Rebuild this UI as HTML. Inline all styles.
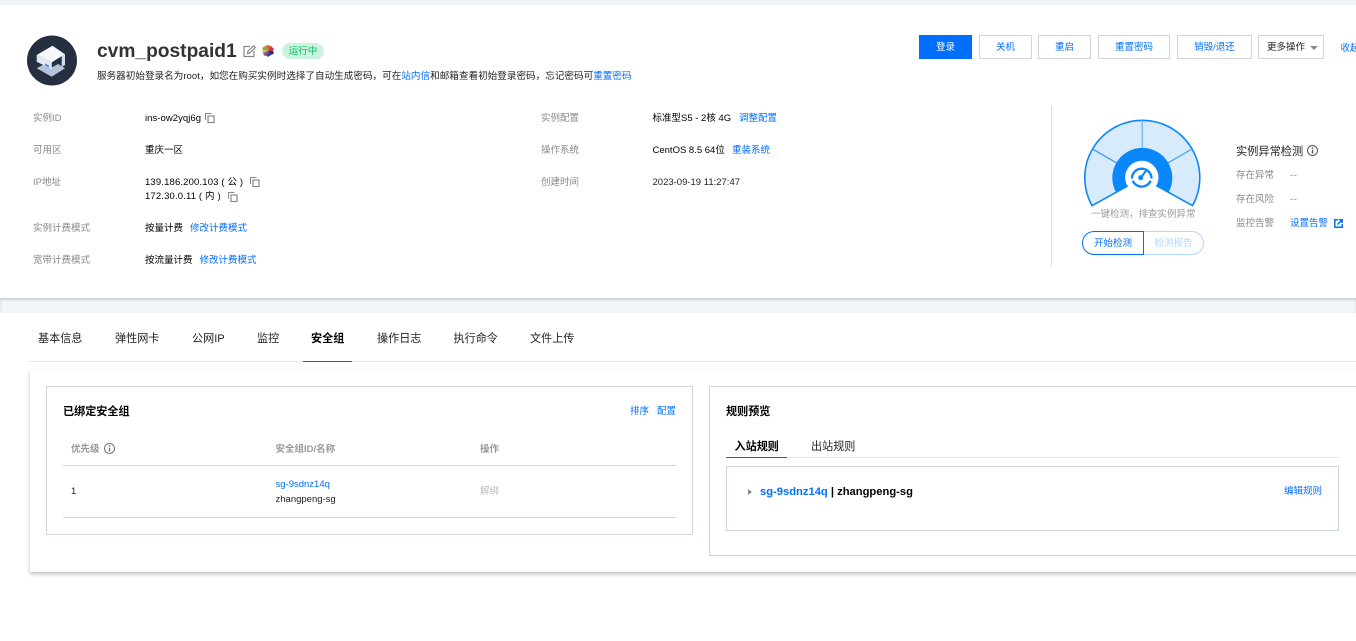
<!DOCTYPE html>
<html lang="zh"><head><meta charset="utf-8"><title>cvm_postpaid1</title>
<style>
html,body{margin:0;padding:0;width:1356px;height:641px;overflow:hidden;background:#fff}
body{position:relative;font-family:"Liberation Sans","Noto Sans CJK SC",sans-serif;font-size:9.5px;color:#000}
.t{position:absolute;line-height:12px;white-space:nowrap;margin-top:1px}
.g{color:#888}.b{color:#006eff}.d{color:#222}
.a{position:absolute;box-sizing:border-box}
.btn{position:absolute;top:35px;height:24px;box-sizing:border-box;border:1px solid #cfd5de;color:#006eff;text-align:center;line-height:24px;white-space:nowrap;background:#fff}
svg{position:absolute;overflow:visible}
</style></head><body>
<div class="a" style="left:0;top:0;width:1356px;height:5px;background:#f2f4f8"></div>
<div class="a" style="left:0;top:298px;width:1356px;height:15px;background:#f2f4f8;box-shadow:inset 0 2px 3px -1px #b4b9c2"></div>

<svg style="left:27px;top:35px" width="51" height="51" viewBox="0 0 51 51"><circle cx="25" cy="25.500" r="25" fill="#252f3f"/>
<path d="M9.700 33.300L25 25L38 33.300L24.700 41.700Z" fill="#b4c3da"/>
<path d="M24.700 27.500L34.700 21.500V27L24.700 32.500Z" fill="#252f3f"/>
<path d="M9.700 20V26.700L24.700 34.300V27.300Z" fill="#dfe8f5"/>
<path d="M34.700 21L38 19.300V30L34.700 31.700Z" fill="#d3dded"/>
<path d="M18 28.500L22 30.500V32.500L18 30.500Z" fill="#3d8ef0"/>
<path d="M9.700 20L25.500 10.700L38 19.300L24.700 27.300Z" fill="#f6f8fb"/></svg>

<span class="t" style="left:97px;top:38px;font-size:19.200px;line-height:26px;font-weight:700;color:#333">cvm_postpaid1</span>
<svg style="left:243px;top:45px" width="13" height="13" viewBox="0 0 13 13" fill="none" stroke="#888" stroke-width="1.200"><path d="M7 1.500H1V11.500H11V6"/><path d="M4.500 8.500L5 6L10.500 .8L12.300 2.500L7 7.800Z" fill="#fff"/></svg>
<svg style="left:262px;top:45px" width="12" height="12" viewBox="0 0 12 12"><path d="M6 6L3 1L6 0L9 1Z" fill="#e0663a"/><path d="M6 6L9 1L12 4L11 6Z" fill="#c23b4e"/><path d="M6 6L11 6L12 8.500L9 10Z" fill="#28306e"/><path d="M6 6L9 10L6 12L5 11Z" fill="#3a3f80"/><path d="M6 6L5 11L2 10.500L1 8Z" fill="#8c4c9e"/><path d="M6 6L1 8L0 6L1 5Z" fill="#e9b93a"/><path d="M6 6L1 5L0 3L3 1Z" fill="#7ab648"/></svg>
<div class="a" style="left:282px;top:43px;width:42px;height:16px;border-radius:8px;background:#ccf2e0;color:#0abf5b;font-size:9.500px;line-height:17px;text-align:center">运行中</div>
<span class="t d" style="left:97px;top:69.500px;font-size:9.600px">服务器初始登录名为root，如您在购买实例时选择了自动生成密码，可在<span class="b">站内信</span>和邮箱查看初始登录密码，忘记密码可<span class="b">重置密码</span></span>

<div class="btn" style="left:919px;width:53px;background:#006eff;border-color:#006eff;color:#fff">登录</div>
<div class="btn" style="left:979px;width:53px">关机</div>
<div class="btn" style="left:1038px;width:53px">重启</div>
<div class="btn" style="left:1098px;width:72px">重置密码</div>
<div class="btn" style="left:1177px;width:75px">销毁/退还</div>
<div class="btn" style="left:1258px;width:66px;color:#222;text-align:left;padding-left:8px">更多操作</div>
<div class="a" style="left:1310px;top:46px;border:4px solid transparent;border-top:4px solid #888;border-bottom:0"></div>
<span class="t b" style="left:1340.500px;top:42px">收起</span>

<span class="t g" style="left:33px;top:112px">实例ID</span>
<span class="t" style="left:145px;top:112px;letter-spacing:.05px">ins-ow2yqj6g</span>
<span class="t g" style="left:33px;top:144px">可用区</span>
<span class="t" style="left:145px;top:144px">重庆一区</span>
<span class="t g" style="left:33px;top:176px">IP地址</span>
<span class="t" style="left:145px;top:176px;letter-spacing:.15px">139.186.200.103 ( 公 )</span>
<span class="t" style="left:145px;top:190px;letter-spacing:.15px">172.30.0.11 ( 内 )</span>
<span class="t g" style="left:33px;top:222px">实例计费模式</span>
<span class="t" style="left:145px;top:222px">按量计费</span><span class="t b" style="left:190px;top:222px">修改计费模式</span>
<span class="t g" style="left:33px;top:254px">宽带计费模式</span>
<span class="t" style="left:145px;top:254px">按流量计费</span><span class="t b" style="left:199.500px;top:254px">修改计费模式</span>

<svg style="left:205px;top:113px" width="10" height="10" viewBox="0 0 10 10" fill="none" stroke="#888"><path d="M.5 7V.5H6.500"/><rect x="3" y="3" width="6" height="6.500" stroke-width="1.200"/></svg>
<svg style="left:250px;top:177px" width="10" height="10" viewBox="0 0 10 10" fill="none" stroke="#888"><path d="M.5 7V.5H6.500"/><rect x="3" y="3" width="6" height="6.500" stroke-width="1.200"/></svg>
<svg style="left:228px;top:192px" width="10" height="10" viewBox="0 0 10 10" fill="none" stroke="#888"><path d="M.5 7V.5H6.500"/><rect x="3" y="3" width="6" height="6.500" stroke-width="1.200"/></svg>

<span class="t g" style="left:541px;top:112px">实例配置</span>
<span class="t" style="left:652.500px;top:112px">标准型S5 - 2核 4G</span><span class="t b" style="left:739px;top:112px">调整配置</span>
<span class="t g" style="left:541px;top:144px">操作系统</span>
<span class="t" style="left:652.500px;top:144px">CentOS 8.5 64位</span><span class="t b" style="left:732px;top:144px">重装系统</span>
<span class="t g" style="left:541px;top:176px">创建时间</span>
<span class="t" style="left:652.500px;top:176px;color:#222">2023-09-19 11:27:47</span>

<div class="a" style="left:1051px;top:106px;width:1px;height:161px;background:#dde1e7"></div>

<svg style="left:1080px;top:115px" width="125" height="95" viewBox="1080 115 125 95">
<path d="M1142.300 177.800L1092 205.700A57.500 57.500 0 1 1 1192.600 205.700Z" fill="#d8ebfd" stroke="#0a87fb" stroke-width="1.600" stroke-linejoin="round"/>
<path d="M1142.300 120.500V178" stroke="#79bdfc" stroke-width="1.500"/>
<path d="M1092.500 149L1142.300 177.800L1192 149" fill="none" stroke="#3fa0fb" stroke-width="1.300"/>
<path d="M1142.300 177.800L1116.300 192.800A30 30 0 1 1 1168.300 192.800Z" fill="#0a87fb"/>
<circle cx="1141.800" cy="177.400" r="16.700" fill="#fff"/>
<path d="M1131.900 178.500A9.800 9.800 0 1 1 1151.500 178.500" fill="none" stroke="#0a87fb" stroke-width="2.300"/>
<path d="M1132.700 180.700A9.800 9.800 0 0 0 1150.700 180.700" fill="none" stroke="#0a87fb" stroke-width="2.300"/>
<path d="M1140.700 177.700L1146.700 170" stroke="#0a87fb" stroke-width="2"/><circle cx="1140.700" cy="177.700" r="2.500" fill="#0a87fb"/>
</svg>
<span class="t g" style="left:1091px;top:208px;color:#999">一键检测，排查实例异常</span>
<div class="a" style="left:1082px;top:231px;width:62px;height:24px;border:1px solid #006eff;border-radius:12px 0 0 12px;color:#006eff;text-align:center;line-height:24px">开始检测</div>
<div class="a" style="left:1144px;top:231px;width:60px;height:24px;border:1px solid #b2d4ff;border-left:0;border-radius:0 12px 12px 0;color:#b2d4ff;text-align:center;line-height:24px">检测报告</div>

<span class="t" style="left:1236px;top:145px;font-size:11.200px;color:#222">实例异常检测</span>
<svg style="left:1307px;top:145px" width="11" height="11" viewBox="0 0 11 11" fill="none" stroke="#555"><circle cx="5.500" cy="5.500" r="5"/><path d="M5.500 2.300V3.700M5.500 4.800V8.500" stroke-width="1.400"/></svg>
<span class="t g" style="left:1236px;top:169px">存在异常</span><span class="t g" style="left:1290px;top:169px;letter-spacing:.6px">--</span>
<span class="t g" style="left:1236px;top:193px">存在风险</span><span class="t g" style="left:1290px;top:193px;letter-spacing:.6px">--</span>
<span class="t g" style="left:1236px;top:217px">监控告警</span><span class="t b" style="left:1290px;top:217px">设置告警</span>
<svg style="left:1334px;top:219px" width="9" height="9" viewBox="0 0 9 9" fill="none" stroke="#006eff" stroke-width="1.500"><path d="M4 .8H.8V8.200H8.200V5"/><path d="M3.500 5.500L8 1M5 .8H8.200V4"/></svg>

<div class="a" style="left:29px;top:361px;width:1327px;height:1px;background:#e5e8ed"></div>
<span class="t d" style="left:38px;top:332px;font-size:11.100px">基本信息</span>
<span class="t d" style="left:115px;top:332px;font-size:11.100px">弹性网卡</span>
<span class="t d" style="left:192px;top:332px;font-size:11.100px">公网IP</span>
<span class="t d" style="left:257px;top:332px;font-size:11.100px">监控</span>
<span class="t" style="left:311px;top:332px;font-size:11.100px;font-weight:700">安全组</span>
<span class="t d" style="left:377px;top:332px;font-size:11.100px">操作日志</span>
<span class="t d" style="left:453.500px;top:332px;font-size:11.100px">执行命令</span>
<span class="t d" style="left:530px;top:332px;font-size:11.100px">文件上传</span>
<div class="a" style="left:303px;top:361px;width:49px;height:1px;background:#0a67d9"></div>

<div class="a" style="left:30px;top:370px;width:1340px;height:202px;background:#fff;box-shadow:0 2px 4px rgba(54,58,80,.32)"></div>

<div class="a" style="left:46px;top:386px;width:647px;height:149px;border:1px solid #cfd5de"></div>
<span class="t" style="left:63px;top:405px;font-size:11.100px;font-weight:700">已绑定安全组</span>
<span class="t b" style="left:630px;top:405px">排序</span><span class="t b" style="left:657px;top:405px">配置</span>
<span class="t g" style="left:71px;top:443px;font-weight:700;color:#999">优先级</span>
<svg style="left:104px;top:443px" width="11" height="11" viewBox="0 0 11 11" fill="none" stroke="#777"><circle cx="5.500" cy="5.500" r="5"/><path d="M5.500 2.300V3.700M5.500 4.800V8.500" stroke-width="1.400"/></svg>
<span class="t g" style="left:275.500px;top:443px;font-weight:700;color:#999">安全组ID/名称</span>
<span class="t g" style="left:480px;top:443px;font-weight:700;color:#999">操作</span>
<div class="a" style="left:63px;top:465px;width:613px;height:1px;background:#cfd5de"></div>
<span class="t d" style="left:71px;top:485px">1</span>
<span class="t b" style="left:275.500px;top:477.500px">sg-9sdnz14q</span>
<span class="t d" style="left:275.500px;top:492.500px">zhangpeng-sg</span>
<span class="t" style="left:480px;top:485px;color:#bbb">解绑</span>
<div class="a" style="left:63px;top:517px;width:613px;height:1px;background:#cfd5de"></div>

<div class="a" style="left:709px;top:386px;width:660px;height:170px;border:1px solid #cfd5de"></div>
<span class="t" style="left:726px;top:405px;font-size:11.100px;font-weight:700">规则预览</span>
<span class="t" style="left:734.500px;top:440px;font-size:11.100px;font-weight:700">入站规则</span>
<span class="t d" style="left:811px;top:440px;font-size:11.100px">出站规则</span>
<div class="a" style="left:726px;top:457px;width:613px;height:1px;background:#e5e8ed"></div>
<div class="a" style="left:726px;top:457px;width:61px;height:1px;background:#0a67d9"></div>
<div class="a" style="left:726px;top:466px;width:613px;height:65px;border:1px solid #cfd5de"></div>
<div class="a" style="left:748px;top:488.500px;border:3px solid transparent;border-left:4px solid #888;border-right:0"></div>
<span class="t" style="left:760px;top:485px;font-size:11.200px;font-weight:700"><span class="b">sg-9sdnz14q</span> | zhangpeng-sg</span>
<span class="t b" style="left:1284px;top:485px">编辑规则</span>
</body></html>
